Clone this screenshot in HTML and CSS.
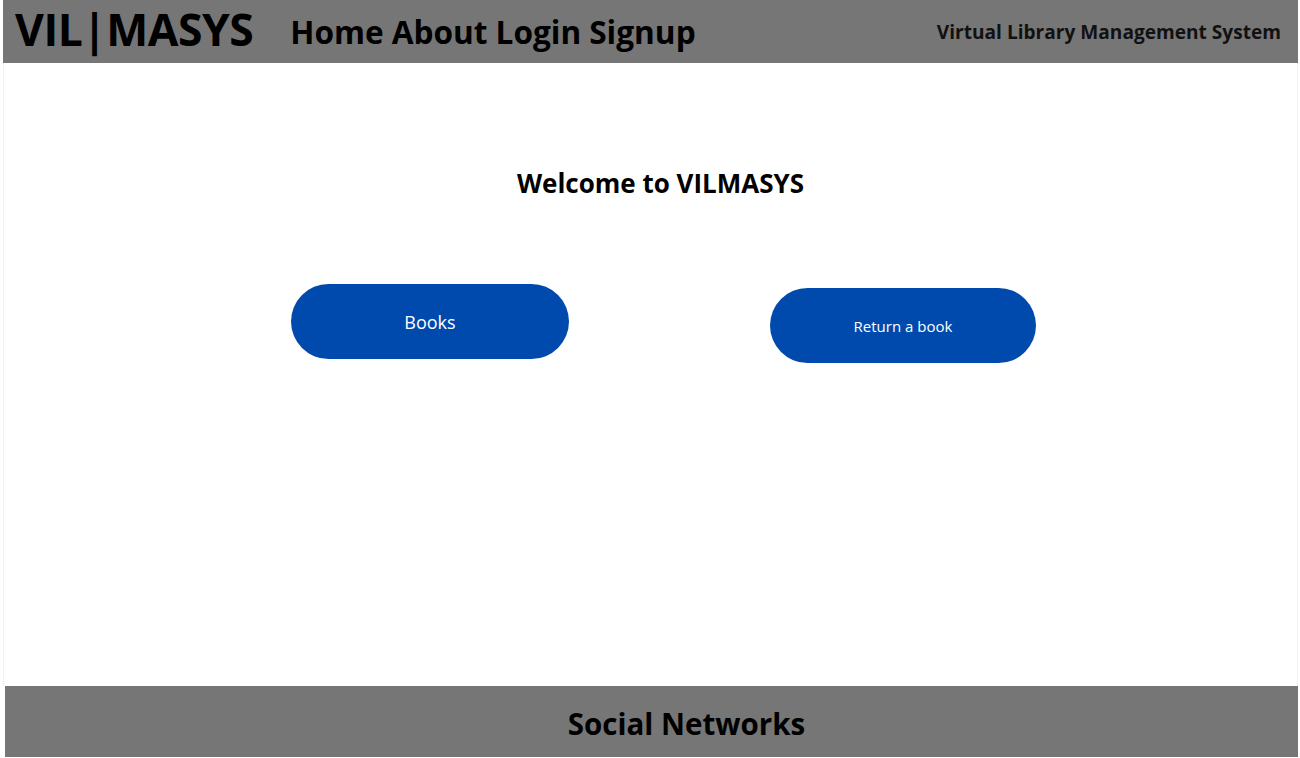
FILE: index.html
```html
<!DOCTYPE html>
<html>
<head>
<meta charset="utf-8">
<link rel="stylesheet" href="styles.css">
</head>
<body>
<header class="topbar">
  <div class="brand">VIL|MASYS</div>
  <nav class="nav">
    <a href="#">Home</a>
    <a href="#">About</a>
    <a href="#">Login</a>
    <a href="#">Signup</a>
  </nav>
  <div class="tagline">Virtual Library Management System</div>
</header>
<main class="main">
  <h1 class="welcome">Welcome to VILMASYS</h1>
  <div class="actions">
    <button class="btn btn-books">Books</button>
    <button class="btn btn-return">Return a book</button>
  </div>
</main>
<footer class="footer">
  <h2 class="social">Social Networks</h2>
</footer>
</body>
</html>
```
FILE: styles.css
```css
* { box-sizing: border-box; }
html, body { margin: 0; padding: 0; }
body {
  font-family: "Open Sans", "Liberation Sans", sans-serif;
  background: #fff;
  color: #000;
  width: 1300px;
  height: 758px;
  overflow: hidden;
}
.topbar {
  margin: 0 2px 0 3px;
  height: 63px;
  background: #767676;
  display: flex;
  align-items: center;
  padding: 0 17px 0 12px;
}
.brand {
  font-size: 44.5px;
  font-weight: 700;
  letter-spacing: -0.5px;
  line-height: 1;
  margin-top: -4px;
}
.nav {
  display: flex;
  gap: 8px;
  margin-left: 37px;
}
.nav a {
  color: #000;
  text-decoration: none;
  font-size: 31.6px;
  font-weight: 700;
  line-height: 1;
}
.tagline {
  margin-left: auto;
  font-size: 19.1px;
  font-weight: 700;
  color: #111;
}
.main {
  height: 623px;
  margin: 0 2px 0 3px;
  border-left: 1px dotted #e6e6e6;
  border-right: 1px dotted #e6e6e6;
  display: flex;
  flex-direction: column;
  align-items: center;
}
.welcome {
  margin: 102px 0 0 20px;
  font-size: 26px;
  font-weight: 700;
}
.actions {
  width: 100%;
  display: flex;
  align-items: flex-start;
  padding-left: 287px;
  margin-top: 83px;
}
.btn {
  border: none;
  background: #004aad;
  color: #fff;
  font-family: "Open Sans", "Liberation Sans", sans-serif;
  height: 75px;
  border-radius: 38px;
}
.btn-books {
  width: 278px;
  font-size: 18px;
}
.btn-return {
  width: 266px;
  font-size: 15px;
  margin-left: 201px;
  margin-top: 4px;
}
.footer {
  margin: 0 2px 0 5px;
  height: 71px;
  background: #767676;
  display: flex;
  align-items: center;
  justify-content: center;
  padding: 4px 0 0 70px;
}
.social {
  margin: 0;
  font-size: 29.5px;
  font-weight: 700;
}
```
